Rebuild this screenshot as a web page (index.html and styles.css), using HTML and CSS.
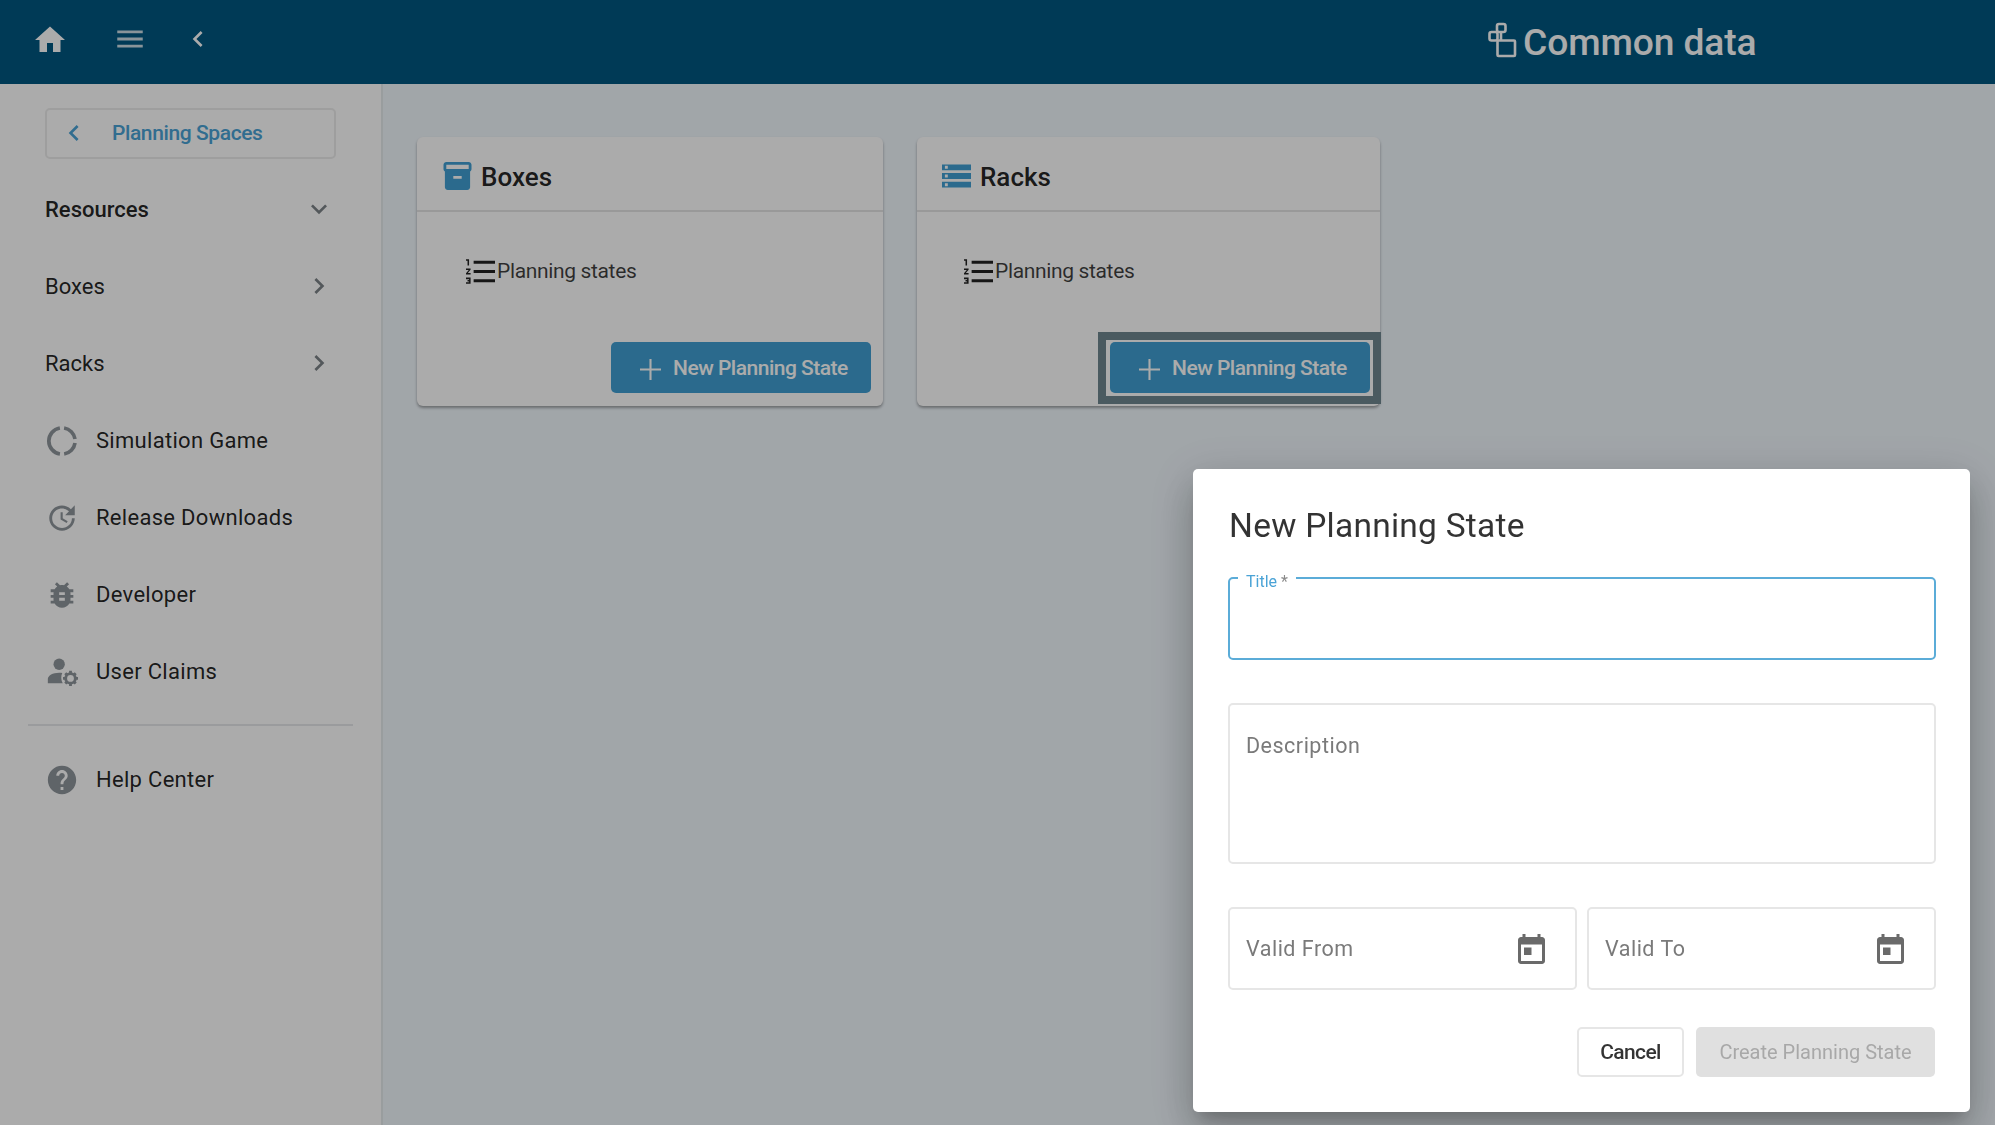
FILE: index.html
```html
<!DOCTYPE html>
<html lang="en">
<head>
<meta charset="utf-8">
<title>Common data</title>
<link rel="stylesheet" href="styles.css">
</head>
<body>
<div class="app">
  <header class="topbar">
    <svg class="top-icon home" viewBox="0 0 24 24"><path d="M10 20v-6h4v6h5v-8h3L12 3 2 12h3v8z"/></svg>
    <svg class="top-icon menu" viewBox="0 0 24 24"><path d="M3 18h18v-2H3v2zm0-5h18v-2H3v2zm0-7v2h18V6H3z"/></svg>
    <svg class="top-icon back" viewBox="0 0 24 24"><path d="M15.41 7.41 14 6l-6 6 6 6 1.41-1.41L10.83 12z"/></svg>
    <div class="app-title">
      <svg class="title-icon" viewBox="0 0 29 36"><g fill="none" stroke="currentColor" stroke-width="2.6"><rect x="9" y="2" width="8.500" height="8" rx="2"/><rect x="1.500" y="10" width="8" height="8.500" rx="2"/><rect x="9.500" y="18.500" width="17.500" height="15.500" rx="1"/><path d="M13 10v8.500"/></g></svg>
      <span>Common data</span>
    </div>
  </header>
  <div class="shell">
    <nav class="sidebar">
      <a class="back-btn">
        <svg class="back-chev" viewBox="0 0 24 24"><path d="M15.41 7.41 14 6l-6 6 6 6 1.41-1.41L10.83 12z"/></svg>
        <span>Planning Spaces</span>
      </a>
      <div class="nav-row strong"><span>Resources</span><svg class="chev" viewBox="0 0 24 24"><path d="M16.59 8.59 12 13.17 7.41 8.59 6 10l6 6 6-6z"/></svg></div>
      <div class="nav-row"><span>Boxes</span><svg class="chev" viewBox="0 0 24 24"><path d="M10 6 8.59 7.41 13.17 12l-4.58 4.59L10 18l6-6z"/></svg></div>
      <div class="nav-row"><span>Racks</span><svg class="chev" viewBox="0 0 24 24"><path d="M10 6 8.59 7.41 13.17 12l-4.58 4.59L10 18l6-6z"/></svg></div>
      <div class="nav-row icon-row">
        <svg class="nav-icon" viewBox="0 0 24 24"><circle cx="12" cy="12" r="9.300" fill="none" stroke="currentColor" stroke-width="2.600" pathLength="56.55" stroke-dasharray="11.2 3 25.3 3 11.2 2.85" stroke-dashoffset="-1.4"/></svg>
        <span>Simulation Game</span>
      </div>
      <div class="nav-row icon-row">
        <svg class="nav-icon" viewBox="0 0 24 24"><path d="M21 10.120h-6.780l2.740-2.820c-2.730-2.700-7.150-2.800-9.880-.1-2.730 2.710-2.730 7.080 0 9.790s7.150 2.710 9.880 0C18.320 15.650 19 14.080 19 12.100h2c0 1.980-.88 4.550-2.640 6.290-3.510 3.480-9.210 3.480-12.720 0-3.500-3.470-3.530-9.110-.02-12.580s9.140-3.470 12.650 0L21 3v7.120zM12.500 8v4.250l3.500 2.080-.72 1.210L11 13V8h1.500z"/></svg>
        <span>Release Downloads</span>
      </div>
      <div class="nav-row icon-row">
        <svg class="nav-icon" viewBox="0 0 24 24"><path d="M20 8h-2.810c-.45-.78-1.070-1.450-1.820-1.960L17 4.410 15.590 3l-2.170 2.170C12.960 5.060 12.490 5 12 5c-.49 0-.96.06-1.410.17L8.410 3 7 4.410l1.620 1.630C7.880 6.550 7.260 7.220 6.810 8H4v2h2.090c-.05.33-.09.66-.09 1v1H4v2h2v1c0 .34.04.67.09 1H4v2h2.810c1.040 1.790 2.970 3 5.190 3s4.150-1.210 5.190-3H20v-2h-2.090c.05-.33.09-.66.09-1v-1h2v-2h-2v-1c0-.34-.04-.67-.09-1H20V8zm-6 8h-4v-2h4v2zm0-4h-4v-2h4v2z"/></svg>
        <span>Developer</span>
      </div>
      <div class="nav-row icon-row">
        <svg class="nav-icon" viewBox="0 0 24 24"><circle cx="10" cy="6.500" r="4"/><path d="M2 20v-3c0-2.500 3.500-4.500 8-4.500.8 0 1.500.1 2.200.2-1 1.900-1 4.900.3 7.300z"/><circle cx="18" cy="16.500" r="3.400" fill="none" stroke="currentColor" stroke-width="2"/><g stroke="currentColor" stroke-width="2"><path d="M18 11.200v2M18 19.800v2M12.700 16.500h2M21.300 16.500h2M14.300 12.800l1.400 1.400M20.300 18.800l1.400 1.400M21.700 12.800l-1.400 1.400M15.700 18.800l-1.400 1.400"/></g></svg>
        <span>User Claims</span>
      </div>
      <hr class="divider">
      <div class="nav-row icon-row">
        <svg class="nav-icon" viewBox="0 0 24 24"><path d="M12 2C6.480 2 2 6.480 2 12s4.480 10 10 10 10-4.480 10-10S17.520 2 12 2zm1 17h-2v-2h2v2zm2.070-7.750l-.9.920C13.450 12.900 13 13.500 13 15h-2v-.5c0-1.100.45-2.100 1.170-2.830l1.240-1.260c.37-.36.59-.86.59-1.410 0-1.100-.9-2-2-2s-2 .9-2 2H8c0-2.210 1.790-4 4-4s4 1.790 4 4c0 .88-.36 1.680-.93 2.250z"/></svg>
        <span>Help Center</span>
      </div>
    </nav>
    <main class="content">
      <section class="card card-boxes">
        <h2 class="card-head">
          <svg class="card-icon" viewBox="2 2 20 20"><path d="M20 2H4c-1 0-2 .9-2 2v3.010c0 .72.43 1.340 1 1.690V20c0 1.100 1.100 2 2 2h14c.9 0 2-.9 2-2V8.700c.57-.35 1-.97 1-1.690V4c0-1.100-1-2-2-2zm-5 12H9v-2h6v2zm5-7H4V4l16-.02V7z"/></svg>
          <span>Boxes</span>
        </h2>
        <div class="card-row">
          <svg class="list-icon" viewBox="2 4 19 16"><path d="M2 17h2v.5H3v1h1v.5H2v1h3v-4H2v1zm1-9h1V4H2v1h1v3zm-1 3h1.800L2 13.100v.9h3v-1H3.200L5 10.900V10H2v1zm5-6v2h14V5H7zm0 14h14v-2H7v2zm0-6h14v-2H7v2z"/></svg>
          <span>Planning states</span>
        </div>
        <div class="card-foot">
          <button class="primary"><svg class="plus" viewBox="5 5 14 14"><path d="M19 12.700h-6.300V19h-1.400v-6.300H5v-1.400h6.300V5h1.400v6.300H19z"/></svg><span>New Planning State</span></button>
        </div>
      </section>
      <section class="card card-racks">
        <h2 class="card-head">
          <svg class="card-icon" viewBox="2 4 20 16"><path d="M2 20h20v-4H2v4zm2-3h2v2H4v-2zM2 4v4h20V4H2zm4 3H4V5h2v2zm-4 7h20v-4H2v4zm2-3h2v2H4v-2z"/></svg>
          <span>Racks</span>
        </h2>
        <div class="card-row">
          <svg class="list-icon" viewBox="2 4 19 16"><path d="M2 17h2v.5H3v1h1v.5H2v1h3v-4H2v1zm1-9h1V4H2v1h1v3zm-1 3h1.800L2 13.100v.9h3v-1H3.200L5 10.900V10H2v1zm5-6v2h14V5H7zm0 14h14v-2H7v2zm0-6h14v-2H7v2z"/></svg>
          <span>Planning states</span>
        </div>
        <div class="card-foot">
          <div class="focus-ring"><div class="focus-gap">
            <button class="primary"><svg class="plus" viewBox="5 5 14 14"><path d="M19 12.700h-6.300V19h-1.400v-6.300H5v-1.400h6.300V5h1.400v6.300H19z"/></svg><span>New Planning State</span></button>
          </div></div>
        </div>
      </section>
    </main>
  </div>
</div>
<div class="backdrop"></div>
<div class="dialog" role="dialog">
  <h1 class="dialog-title">New Planning State</h1>
  <div class="field focused title-field">
    <label class="float-label"><span class="label-main">Title</span> <span class="label-star">*</span></label>
  </div>
  <div class="field desc-field"><span class="placeholder">Description</span></div>
  <div class="date-row">
    <div class="field date-field"><span class="placeholder">Valid From</span>
      <svg class="cal" viewBox="3 1 18 20"><path d="M19 3h-1V1h-2v2H8V1H6v2H5c-1.110 0-1.990.9-1.990 2L3 19c0 1.100.89 2 2 2h14c1.100 0 2-.9 2-2V5c0-1.100-.9-2-2-2zm0 16H5V8h14v11zM7 10h5v5H7z"/></svg>
    </div>
    <div class="field date-field"><span class="placeholder">Valid To</span>
      <svg class="cal" viewBox="3 1 18 20"><path d="M19 3h-1V1h-2v2H8V1H6v2H5c-1.110 0-1.990.9-1.990 2L3 19c0 1.100.89 2 2 2h14c1.100 0 2-.9 2-2V5c0-1.100-.9-2-2-2zm0 16H5V8h14v11zM7 10h5v5H7z"/></svg>
    </div>
  </div>
  <div class="dialog-actions">
    <button class="btn-cancel">Cancel</button>
    <button class="btn-create" disabled>Create Planning State</button>
  </div>
</div>
</body>
</html>
```

FILE: styles.css
```css
* { box-sizing: border-box; }
html, body { height: 100%; }
body {
  margin: 0;
  font-family: Roboto, "Liberation Sans", sans-serif;
  color: rgba(0, 0, 0, .87);
  overflow: hidden;
  background: #f1f8fd;
}
.app { height: 1125px; display: flex; flex-direction: column; }

.topbar {
  height: 84px;
  flex: none;
  background: #005781;
  display: flex;
  align-items: center;
  color: #fff;
}
.top-icon { fill: #fff; display: block; }
.home { width: 36px; height: 36px; margin-left: 32px; margin-top: -4px; }
.menu { width: 34px; height: 34px; margin-left: 45px; margin-top: -6px; opacity: .8; }
.back { width: 32px; height: 32px; margin-left: 35px; margin-top: -6px; }
.app-title {
  display: flex;
  align-items: center;
  margin-left: 1274px;
  font-size: 37.200px;
  font-weight: 500;
  letter-spacing: -.1px;
}
.title-icon { width: 29px; height: 36px; margin-right: 6px; margin-top: -4px; }

.shell { flex: 1; display: flex; min-height: 0; }
.sidebar {
  width: 383px;
  flex: none;
  background: #fff;
  border-right: 2px solid #e4eaec;
  padding: 24px 0 0;
}
.back-btn {
  display: flex;
  align-items: center;
  width: 291px;
  height: 51px;
  margin: 0 0 12px 45px;
  padding-bottom: 2px;
  border: 2px solid #ececec;
  border-radius: 5px;
  color: #4aa3d6;
  font-size: 21px;
  font-weight: 500;
  letter-spacing: -.4px;
}
.back-chev { width: 32px; height: 32px; fill: currentColor; margin-left: 11px; }
.back-btn span { margin-left: 22px; }
.nav-row {
  height: 77px;
  padding: 0 45px 0 45px;
  display: flex;
  align-items: center;
  justify-content: space-between;
  font-size: 22px;
}
.strong { font-weight: 500; }
.chev { width: 32px; height: 32px; fill: #7d8388; margin-right: 1px; margin-top: -1px; }
.icon-row { justify-content: flex-start; letter-spacing: .3px; }
.nav-icon { width: 34px; height: 34px; color: #8e959b; fill: #8e959b; margin-right: 17px; }
.divider { border: 0; border-top: 2px solid #e6e8ea; margin: 14px 28px 15px 28px; }

.content { flex: 1; display: flex; align-items: flex-start; gap: 34px; padding: 53px 34px; }
.card {
  height: 269px;
  background: #fff;
  border-radius: 6px;
  box-shadow: 0 2px 3px rgba(0, 0, 0, .35);
  display: flex;
  flex-direction: column;
}
.card-boxes { width: 466px; }
.card-racks { width: 463px; }
.card-head {
  height: 75px;
  margin: 0;
  padding: 7px 25px 0;
  display: flex;
  align-items: center;
  font-size: 26px;
  font-weight: 500;
  border-bottom: 2px solid #e4e4e4;
}
.card-boxes .card-icon { margin-left: 1px; margin-right: 9px; }
.card-icon { width: 29px; height: 28px; fill: #409fd3; margin-right: 9px; margin-top: -3px; }
.card-racks .card-icon { height: 24px; }
.card-row {
  display: flex;
  align-items: center;
  margin: 44px 0 0 48px;
  font-size: 21px;
  letter-spacing: -.35px;
  height: 30px;
  color: rgba(0, 0, 0, .75);
}
.card-racks .card-row { margin-left: 46px; }
.list-icon { width: 29px; height: 25px; fill: #222; margin-right: 2px; margin-left: 1px; }
.card-foot { margin-top: auto; padding: 0 12px 13px 0; display: flex; justify-content: flex-end; }
.card-racks .card-foot { padding-right: 10px; }
.primary {
  width: 260px;
  height: 51px;
  border: 0;
  border-radius: 5px;
  background: #409fd3;
  color: #fff;
  font: 500 21px Roboto, "Liberation Sans", sans-serif;
  letter-spacing: -.5px;
  display: flex;
  align-items: center;
  padding: 0 0 0 29px;
}
.plus { width: 21px; height: 21px; fill: #fff; margin-right: 12px; margin-top: 3px; }
.focus-ring { background: #6f8690; padding: 8px; margin: -10px -11px -11px 0; }
.focus-gap { background: #fff; padding: 2px 3px 3px 4px; }

.backdrop { position: fixed; inset: 0; background: rgba(0, 0, 0, .33); }
.dialog {
  position: fixed;
  left: 1193px;
  top: 469px;
  width: 777px;
  height: 643px;
  padding: 37px 34px 35px 35px;
  background: #fff;
  border-radius: 5px;
  box-shadow: 0 11px 15px -7px rgba(0, 0, 0, .2), 0 24px 38px 3px rgba(0, 0, 0, .14), 0 9px 46px 8px rgba(0, 0, 0, .12);
  display: flex;
  flex-direction: column;
}
.dialog-title {
  margin: 0 0 31px 1px;
  font-size: 33.500px;
  line-height: 40px;
  font-weight: 400;
  letter-spacing: .25px;
  color: rgba(0, 0, 0, .8);
}
.field {
  position: relative;
  border: 2px solid #e6e6e6;
  border-radius: 5px;
  padding: 0 16px;
  display: flex;
  align-items: center;
  font-size: 21.500px;
}
.title-field { height: 83px; margin-bottom: 43px; }
.focused { border-color: #5bacd8; }
.float-label {
  position: absolute;
  left: 8px;
  top: -7px;
  padding: 0 8px 0 8px;
  background: #fff;
  font-size: 16px;
  line-height: 20px;
}
.label-main { color: #4aa3d6; }
.label-star { color: #8a8a8a; }
.desc-field { height: 161px; margin-bottom: 43px; align-items: flex-start; padding-top: 28px; }
.placeholder { color: #7a7a7a; letter-spacing: .5px; line-height: 26px; }
.date-row { display: flex; gap: 10px; margin-bottom: 37px; }
.date-field { flex: 1; height: 83px; justify-content: space-between; padding-right: 30px; }
.date-field .placeholder { margin-top: 1px; }
.cal { width: 27px; height: 30px; fill: #6a6a6a; margin-top: 1px; }
.dialog-actions { display: flex; justify-content: flex-end; gap: 12px; margin-right: 1px; }
.dialog-actions button {
  height: 50px;
  border-radius: 5px;
  font: 500 21px Roboto, "Liberation Sans", sans-serif;
}
.dialog-actions .btn-cancel { width: 107px; background: #fff; border: 2px solid #e6e6e6; color: rgba(0, 0, 0, .8); letter-spacing: -.6px; }
.dialog-actions .btn-create { width: 239px; background: #e0e0e0; border: 0; color: #a8a8a8; font-weight: 400; font-size: 20px; letter-spacing: 0; }
```
